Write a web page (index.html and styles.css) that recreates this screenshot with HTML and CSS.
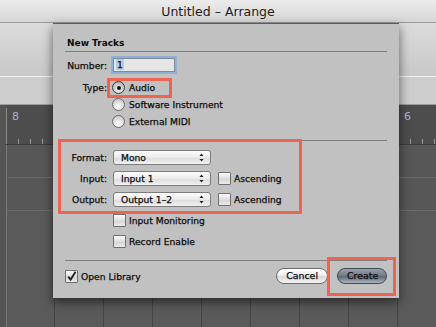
FILE: index.html
```html
<!DOCTYPE html>
<html lang="en">

<head>
  <meta charset="UTF-8" />
  <title>Untitled - Arrange</title>
  <link rel="stylesheet" href="styles.css">
</head>

<body>
  <div class="window">
    <div class="titlebar">Untitled – Arrange</div>
    <div class="toolbar"></div>
    <div class="infobar"></div>

    <div class="arrange">
      <div class="ruler">
        <div class="bar"><span class="bar-num">8</span></div>
        <div class="bar"><span class="bar-num">6</span></div>
      </div>
      <div class="track"></div>
      <div class="track"></div>
      <div class="lanes"></div>
    </div>

    <div class="sheet">
      <div class="sheet-title">New Tracks</div>

      <div class="row row-number">
        <span class="label">Number:</span>
        <span class="field"><span class="sel">1</span></span>
      </div>

      <div class="row row-type">
        <span class="label">Type:</span>
        <span class="choice hl hl-type"><span class="radio on"></span>Audio</span>
      </div>
      <div class="row row-radio">
        <span class="label"></span>
        <span class="choice"><span class="radio"></span>Software Instrument</span>
      </div>
      <div class="row row-radio">
        <span class="label"></span>
        <span class="choice"><span class="radio"></span>External MIDI</span>
      </div>

      <div class="sep sep-mid"></div>

      <div class="io hl hl-io">
        <div class="row row-pop">
          <span class="label">Format:</span>
          <span class="popup">Mono<svg class="arrows" width="5" height="9" viewBox="0 0 5 9"><path d="M2.5 0.5 L4.5 3 L0.5 3 Z M2.5 8.5 L4.5 6 L0.5 6 Z" fill="#222"/></svg></span>
        </div>
        <div class="row row-pop">
          <span class="label">Input:</span>
          <span class="popup">Input 1<svg class="arrows" width="5" height="9" viewBox="0 0 5 9"><path d="M2.5 0.5 L4.5 3 L0.5 3 Z M2.5 8.5 L4.5 6 L0.5 6 Z" fill="#222"/></svg></span>
          <span class="choice asc"><span class="check"></span>Ascending</span>
        </div>
        <div class="row row-pop">
          <span class="label">Output:</span>
          <span class="popup">Output 1–2<svg class="arrows" width="5" height="9" viewBox="0 0 5 9"><path d="M2.5 0.5 L4.5 3 L0.5 3 Z M2.5 8.5 L4.5 6 L0.5 6 Z" fill="#222"/></svg></span>
          <span class="choice asc"><span class="check"></span>Ascending</span>
        </div>
      </div>

      <div class="row row-opt">
        <span class="label"></span>
        <span class="choice"><span class="check"></span>Input Monitoring</span>
      </div>
      <div class="row row-opt">
        <span class="label"></span>
        <span class="choice"><span class="check"></span>Record Enable</span>
      </div>

      <div class="sep sep-foot"></div>

      <div class="footer">
        <span class="choice lib"><span class="check on"><svg width="11" height="11" viewBox="0 0 11 11"><path d="M2.2 5.6 L4.6 8.6 L9.6 0.8" fill="none" stroke="#1d1d1d" stroke-width="1.8"/></svg></span>Open Library</span>
        <div class="buttons">
          <span class="btn">Cancel</span>
          <span class="btn btn-default hl hl-create">Create</span>
        </div>
      </div>
    </div>
  </div>
</body>

</html>
```

FILE: styles.css
```css
body {
  margin: 0;
  padding: 0;
  font-family: 'DejaVu Sans', sans-serif;
  background: #575757;
  overflow: hidden;
}

.window {
  position: relative;
  width: 436px;
  height: 327px;
  display: flex;
  flex-direction: column;
  overflow: hidden;
}

.titlebar {
  height: 22px;
  line-height: 23px;
  text-align: center;
  font-size: 12.5px;
  color: #1c1c1c;
  background: linear-gradient(#ececec, #d6d6d6);
  border-bottom: 1px solid #9a9a9a;
}

.toolbar {
  height: 53px;
  background: linear-gradient(#dcdcdc, #c8c8c8);
  border-bottom: 1px solid #f4f4f4;
}

.infobar {
  height: 27px;
  background: #cdcdcd;
  border-bottom: 1px solid #9c9c9c;
}

.arrange {
  flex: 1;
  padding-left: 6px;
  background: #555;
  display: flex;
  flex-direction: column;
}

.ruler {
  height: 39px;
  display: flex;
  background: #4d4d4d;
  border-bottom: 1px solid #3c3c3c;
}

.bar {
  width: 391px;
  flex-shrink: 0;
  margin-top: 3px;
  border-left: 1px solid #8a8a8a;
  background: repeating-linear-gradient(to right, transparent 0 11px, #9a9a9a 11px 12px) bottom left / 100% 5px no-repeat;
}

.bar-num {
  display: block;
  padding: 2px 0 0 5px;
  font-size: 11px;
  color: #aab4c4;
}

.track {
  height: 32px;
  border-left: 1px solid #7a7a7a;
  border-bottom: 1px solid #6a6a6a;
  background: #575757;
}

.lanes {
  flex: 1;
  border-left: 1px solid #7a7a7a;
  background: repeating-linear-gradient(to right, transparent 0 48px, #444 48px 49px) -1px 0 / 100% 100%;
  background-color: #5a5a5a;
}

/* new tracks sheet */
.sheet {
  position: absolute;
  left: 53px;
  top: 23px;
  width: 322px;
  padding: 12px 12px 14px 12px;
  background: #c1c1c1;
  border-top: 1px solid #5a5a5a;
  box-shadow: 0 4px 10px rgba(0, 0, 0, 0.55);
  font-size: 9.2px;
  color: #0c0c0c;
  -webkit-text-stroke: 0.25px #0c0c0c;
}

.sheet-title {
  font-weight: bold;
  font-size: 9px;
  line-height: 15px;
  padding-left: 2px;
  border-bottom: 1px solid #7e7e7e;
  -webkit-text-stroke: 0;
}

.sep {
  border-bottom: 1px solid #7e7e7e;
}

.row {
  display: flex;
  align-items: center;
}

.label {
  width: 42px;
  margin-right: 6px;
  text-align: right;
  flex-shrink: 0;
}

.row-number {
  margin-top: 6px;
  height: 14px;
}

.field {
  width: 56px;
  height: 10px;
  padding: 1px 2px;
  background: #e6e6e6;
  border: 1px solid #7f8a96;
  box-shadow: 0 0 0 2px #8fb0d6;
  line-height: 10px;
}

.sel {
  background: #b7cbe3;
  padding: 0 1px;
}

.row-type {
  margin-top: 7px;
  height: 17px;
}

.row-radio {
  height: 17px;
}

.choice {
  display: inline-flex;
  align-items: center;
}

.radio {
  width: 11px;
  height: 11px;
  margin: 0 4px 0 -1px;
  border: 1px solid #6d6d6d;
  border-radius: 50%;
  background: radial-gradient(circle at 50% 70%, #ffffff, #d8d8d8 60%, #b9b9b9);
  display: inline-flex;
  align-items: center;
  justify-content: center;
}

.radio.on {
  border-color: #3e3e3e;
  background: radial-gradient(circle at 50% 70%, #f2f2f2, #c4c4c4 60%, #9e9e9e);
}

.radio.on::after {
  content: "";
  width: 4px;
  height: 4px;
  border-radius: 50%;
  background: #111;
}

.sep-mid {
  margin-top: 10px;
}

.io {
  margin-top: 9px;
}

.row-pop {
  height: 15px;
  margin-bottom: 6px;
}

.popup {
  position: relative;
  width: 89px;
  height: 13px;
  padding-left: 7px;
  line-height: 13px;
  border: 1px solid #7c7c7c;
  border-radius: 3px;
  background: linear-gradient(#fdfdfd, #eaeaea 50%, #dcdcdc 51%, #f1f1f1);
}

.arrows {
  position: absolute;
  right: 6px;
  top: 2px;
}

.check {
  width: 11px;
  height: 11px;
  margin-right: 3px;
  border: 1px solid #6f6f6f;
  border-radius: 1px;
  background: linear-gradient(#fafafa, #dedede 50%, #d2d2d2 51%, #ececec);
  display: inline-flex;
  align-items: flex-end;
  justify-content: center;
}

.asc {
  margin-left: 7px;
}

.row-opt {
  height: 14px;
  margin-bottom: 7px;
}

.sep-foot {
  margin-top: 12px;
}

.footer {
  margin-top: 7px;
  height: 16px;
  display: flex;
  align-items: center;
  justify-content: space-between;
}

.lib .check {
  margin-right: 3px;
}

.buttons {
  display: flex;
  gap: 9px;
}

.btn {
  height: 14px;
  line-height: 14px;
  padding: 0 9px;
  border: 1px solid #6c6c6c;
  border-radius: 8px;
  background: linear-gradient(#ffffff, #ececec 50%, #d7d7d7 51%, #f4f4f4);
  font-size: 9.4px;
  text-align: center;
}

.btn-default {
  width: 30px;
  border-color: #3f4a55;
  background: linear-gradient(#9aa2ab, #6f7a85 50%, #5c6772 51%, #a9b3bd);
  color: #111;
}

/* red callouts */
.hl {
  position: relative;
}

.hl::after {
  content: "";
  position: absolute;
  border: 3px solid #ef6450;
  pointer-events: none;
}

.hl-type::after {
  left: -6px;
  top: -3px;
  right: -17px;
  bottom: -4px;
}

.hl-io::after {
  left: -7px;
  top: -11px;
  right: 85px;
  bottom: -7px;
}

.hl-create::after {
  left: -11px;
  top: -12px;
  right: -10px;
  bottom: -13px;
}
```
